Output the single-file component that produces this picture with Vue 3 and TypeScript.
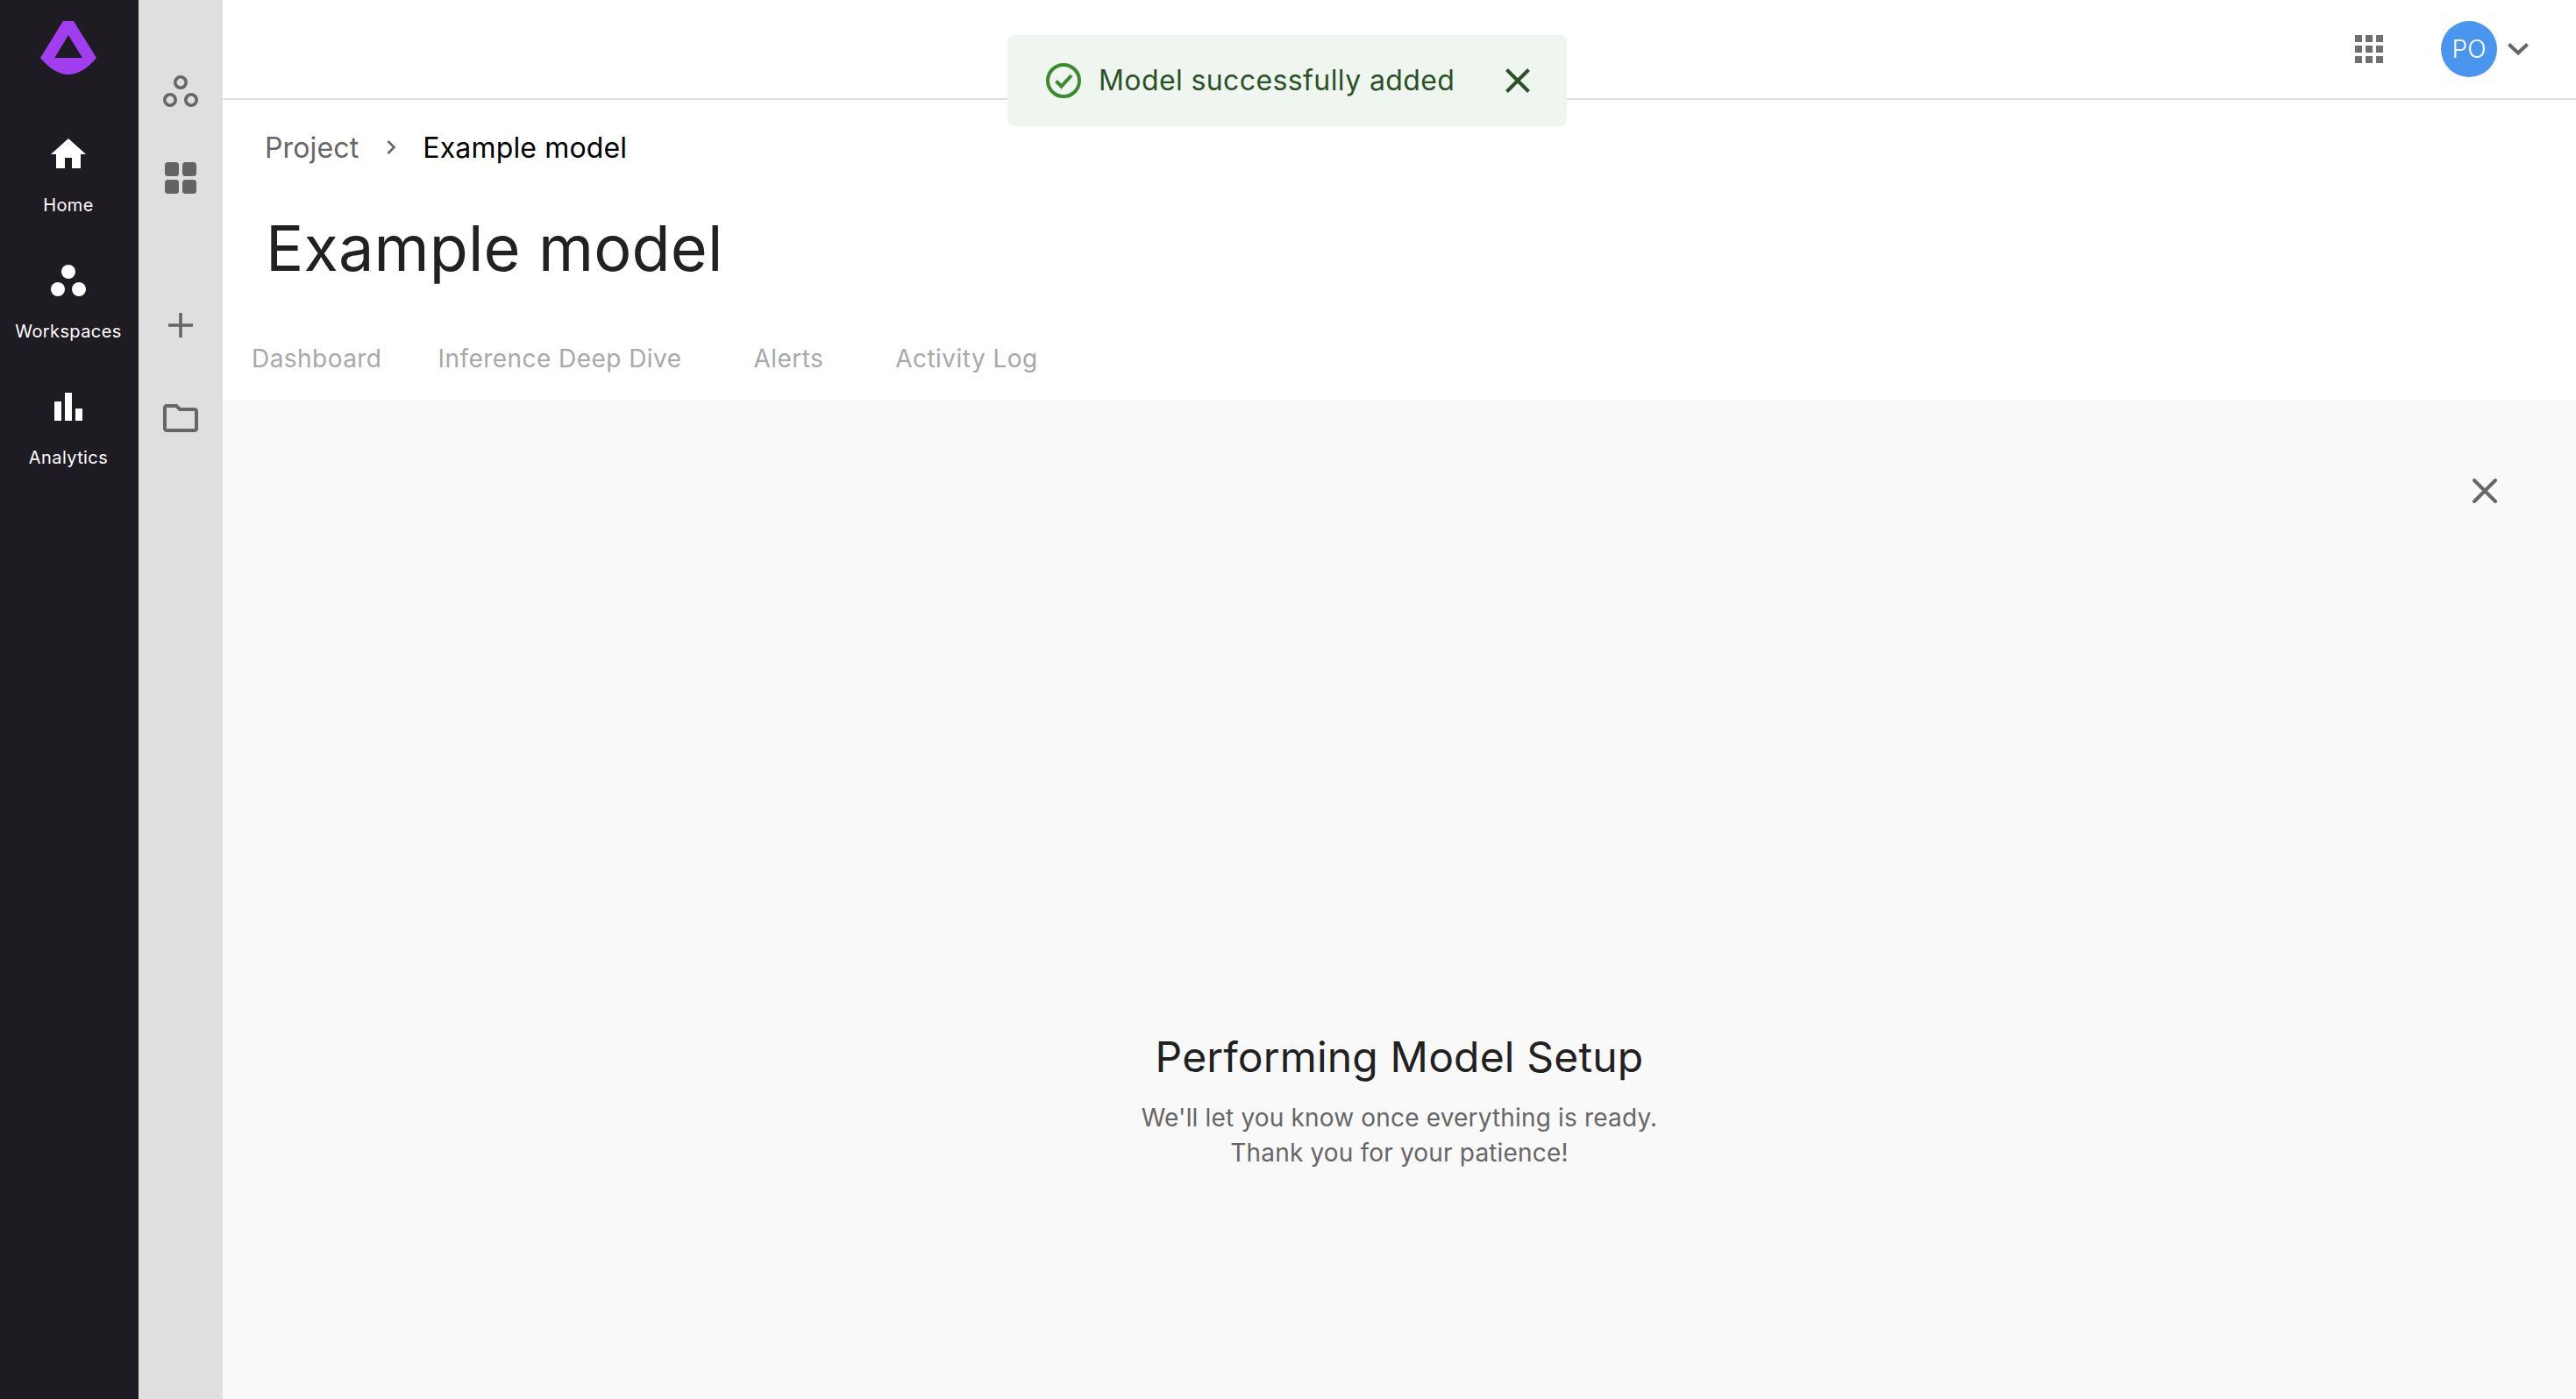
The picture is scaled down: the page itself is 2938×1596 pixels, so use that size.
<script setup lang="ts">
const tabs = [
  { label: 'Dashboard', wide: false },
  { label: 'Inference Deep Dive', wide: false },
  { label: 'Alerts', wide: true },
  { label: 'Activity Log', wide: true },
]
const dots = [0, 12, 24].flatMap((y) => [0, 12, 24].map((x) => ({ x, y })))
</script>

<template>
  <div class="app">
    <nav class="rail">
      <svg class="logo" width="64" height="61" viewBox="0 0 64 61">
        <path fill="#a13ff0" fill-rule="evenodd" d="M26 0H38L64 42Q32 80 0 42ZM32 16L16.3 42H48Z" />
      </svg>
      <div class="rail-item home">
        <svg width="40" height="34" viewBox="2 3 20 17"><path fill="#fff" d="M10 20v-6h4v6h5v-8h3L12 3 2 12h3v8z" /></svg>
        <span>Home</span>
      </div>
      <div class="rail-item spaces">
        <svg width="40" height="36" viewBox="0 0 40 36" fill="#fff">
          <circle cx="20" cy="8" r="8" /><circle cx="8" cy="28" r="8" /><circle cx="32" cy="28" r="8" />
        </svg>
        <span>Workspaces</span>
      </div>
      <div class="rail-item analytics">
        <svg width="32" height="32" viewBox="0 0 32 32" fill="#fff">
          <rect x="0" y="10" width="8" height="22" /><rect x="12" y="0" width="8" height="32" /><rect x="24" y="18" width="8" height="14" />
        </svg>
        <span>Analytics</span>
      </div>
    </nav>

    <aside class="tools">
      <svg class="t-rings" width="40" height="36" viewBox="0 0 40 36" fill="none" stroke="#666" stroke-width="3.6">
        <circle cx="20" cy="8" r="6.2" /><circle cx="8" cy="28" r="6.2" /><circle cx="32" cy="28" r="6.2" />
      </svg>
      <svg class="t-grid" width="36" height="36" viewBox="0 0 36 36" fill="#636363">
        <rect width="16" height="16" rx="3.5" /><rect x="20" width="16" height="16" rx="3.5" />
        <rect y="20" width="16" height="16" rx="3.5" /><rect x="20" y="20" width="16" height="16" rx="3.5" />
      </svg>
      <svg class="t-plus" width="28" height="28" viewBox="0 0 28 28" stroke="#666" stroke-width="3.6">
        <path d="M14 0V28M0 14H28" />
      </svg>
      <svg class="t-folder" width="40" height="32" viewBox="2 4 20 16" fill="#666">
        <path d="M9.17 6l2 2H20v10H4V6h5.17M10 4H4c-1.1 0-1.99.9-1.99 2L2 18c0 1.1.9 2 2 2h16c1.1 0 2-.9 2-2V8c0-1.1-.9-2-2-2h-8l-2-2z" />
      </svg>
    </aside>

    <main class="main">
      <header class="topbar">
        <svg width="32" height="32" viewBox="0 0 32 32" fill="#6f6f6f">
          <rect v-for="d in dots" :key="`${d.x}-${d.y}`" :x="d.x" :y="d.y" width="8" height="8" />
        </svg>
        <div class="avatar">PO</div>
        <svg class="chev" width="24" height="14" viewBox="0 0 24 14" fill="none" stroke="#666" stroke-width="4">
          <path d="M1.5 1.5L12 11.5L22.5 1.5" />
        </svg>
      </header>

      <div class="toast">
        <svg width="40" height="40" viewBox="0 0 40 40" fill="none" stroke="#3b8a2b" stroke-width="4">
          <circle cx="20" cy="20" r="18" />
          <path d="M11.5 20.5L17.5 26.5L29 14" />
        </svg>
        <span class="toast-text">Model successfully added</span>
        <svg class="toast-x" width="28" height="28" viewBox="0 0 28 28" stroke="#2b5127" stroke-width="4">
          <path d="M1.5 1.5L26.5 26.5M26.5 1.5L1.5 26.5" />
        </svg>
      </div>

      <div class="crumbs">
        <span class="crumb-root">Project</span>
        <svg width="12" height="16" viewBox="0 0 12 16" fill="none" stroke="#666" stroke-width="2.6">
          <path d="M2.5 1L9.5 8L2.5 15" />
        </svg>
        <span class="crumb-current">Example model</span>
      </div>

      <h1 class="title">Example model</h1>

      <div class="tabs">
        <span v-for="t in tabs" :key="t.label" class="tab" :class="{ wide: t.wide }">{{ t.label }}</span>
      </div>

      <section class="panel">
        <svg class="panel-x" width="28" height="28" viewBox="0 0 28 28" stroke="#666" stroke-width="4" stroke-linecap="round">
          <path d="M2 2L26 26M26 2L2 26" />
        </svg>
        <h2 class="setup-title">Performing Model Setup</h2>
        <p class="setup-text">We'll let you know once everything is ready.<br />Thank you for your patience!</p>
      </section>
    </main>
  </div>
</template>

<style>
html, body { margin: 0; background: #fff; }
</style>

<style scoped>
.app {
  display: flex;
  width: 2938px;
  height: 1596px;
  overflow: hidden;
  font-family: Inter, "Liberation Sans", sans-serif;
}
.rail {
  width: 158px;
  flex: none;
  background: #1e1c22;
  display: flex;
  flex-direction: column;
  align-items: center;
  padding: 24px 2px 0 0;
  box-sizing: border-box;
  color: #fff;
}
.rail-item {
  display: flex;
  flex-direction: column;
  align-items: center;
}
.rail-item span {
  font-size: 20px;
  line-height: 24px;
  letter-spacing: 0.4px;
  margin-top: 30px;
  white-space: nowrap;
}
.home { margin-top: 73px; }
.spaces { margin-top: 56px; }
.spaces span { margin-top: 28px; }
.analytics { margin-top: 58px; }

.tools {
  width: 96px;
  flex: none;
  background: #dfdfdf;
  display: flex;
  flex-direction: column;
  align-items: center;
  padding-top: 86px;
  box-sizing: border-box;
}
.t-grid { margin-top: 63px; }
.t-plus { margin-top: 136px; }
.t-folder { margin-top: 76px; }

.main {
  position: relative;
  flex: 1;
  min-width: 0;
  display: flex;
  flex-direction: column;
  background: #fff;
}
.topbar {
  height: 114px;
  flex: none;
  box-sizing: border-box;
  border-bottom: 2px solid #e0e0e0;
  display: flex;
  align-items: center;
  justify-content: flex-end;
  padding: 0 54px 1px 0;
}
.avatar {
  width: 64px;
  height: 64px;
  border-radius: 50%;
  background: #4a96ee;
  color: #fff;
  margin-left: 66px;
  display: flex;
  align-items: center;
  justify-content: center;
  font-size: 28px;
  font-weight: 300;
}
.chev { margin-left: 12px; }

.toast {
  position: absolute;
  left: 895px;
  top: 40px;
  width: 638px;
  height: 104px;
  box-sizing: border-box;
  padding-left: 44px;
  background: #eff6ef;
  border-radius: 8px;
  display: flex;
  align-items: center;
}
.toast-text {
  margin-left: 20px;
  font-size: 32px;
  line-height: 40px;
  letter-spacing: 0.4px;
  color: #2b5127;
  white-space: nowrap;
}
.toast-x { margin-left: 58px; }

.crumbs {
  display: flex;
  align-items: center;
  height: 40px;
  margin: 34px 0 0 48px;
  font-size: 32px;
  letter-spacing: 0.15px;
}
.crumb-root { color: #666; }
.crumb-current { color: #000; }
.crumbs svg { margin: 0 30px 0 31px; }

.title {
  margin: 51px 0 0 49px;
  font-size: 72px;
  line-height: 88px;
  font-weight: 400;
  letter-spacing: 0.15px;
  color: #212121;
}
.tabs {
  display: flex;
  gap: 64px;
  margin: 64px 0 0 33px;
  font-size: 28px;
  line-height: 36px;
  letter-spacing: 0.45px;
  color: #a8a8a8;
}
.tab.wide { margin-left: 18px; }

.panel {
  flex: 1;
  margin-top: 29px;
  background: #f9f9f9;
  display: flex;
  flex-direction: column;
  align-items: center;
}
.panel-x {
  align-self: flex-end;
  margin: 90px 90px 0 0;
}
.setup-title {
  margin: 602px 0 0;
  font-size: 48px;
  line-height: 60px;
  font-weight: 400;
  letter-spacing: 0.17px;
  color: #212121;
}
.setup-text {
  margin: 19px 0 0;
  font-size: 28px;
  line-height: 40px;
  letter-spacing: 0.17px;
  color: #666;
  text-align: center;
}
</style>
